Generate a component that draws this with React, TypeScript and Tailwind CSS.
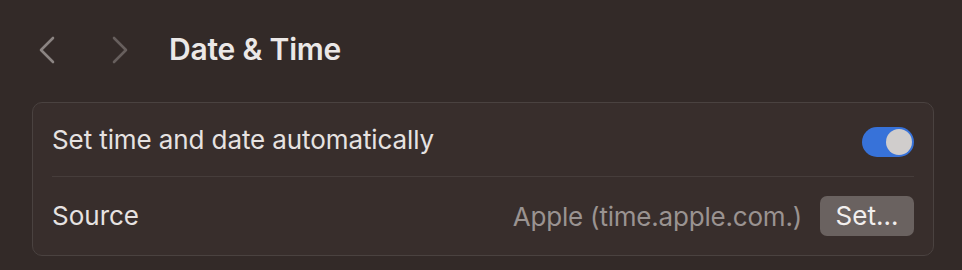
import React from "react";

export default function App() {
  return (
    <div
      className="w-[962px] h-[270px] bg-[#332a28] overflow-hidden"
      style={{ fontFamily: "Inter, 'Noto Sans', sans-serif" }}
    >
      <div className="h-[100px] flex items-center pl-[38px] pb-[2px]">
        <svg width="18" height="28" viewBox="0 0 18 28" className="mt-[1px]">
          <path d="M15 2 L3 14 L15 26" fill="none" stroke="#8b8482" strokeWidth="2.6" strokeLinecap="round" strokeLinejoin="round" />
        </svg>
        <svg width="18" height="28" viewBox="0 0 18 28" className="ml-[55px] mt-[1px]">
          <path d="M3 2 L15 14 L3 26" fill="none" stroke="#675f5d" strokeWidth="2.6" strokeLinecap="round" strokeLinejoin="round" />
        </svg>
        <div className="ml-[40px] text-[30px] font-semibold text-[#ebe8e7] tracking-[-0.2px]">Date &amp; Time</div>
      </div>
      <div className="ml-[32px] w-[902px] h-[154px] mt-[2px] rounded-[10px] border border-[#4a4240] bg-[#382e2c] px-[19px] flex flex-col">
        <div className="h-[74px] flex items-center justify-between border-b border-[#463d3b]">
          <div className="text-[26px] text-[#e6e2e1] tracking-[-0.1px]">Set time and date automatically</div>
          <div className="w-[52px] h-[30px] rounded-full bg-[#3772d9] flex items-center justify-end pr-[2px] mt-[4px]">
            <div className="w-[26px] h-[26px] rounded-full bg-[#d0cdcc]" />
          </div>
        </div>
        <div className="flex-1 flex items-center justify-between">
          <div className="text-[26px] text-[#e6e2e1] pb-[2px]">Source</div>
          <div className="flex items-center">
            <div className="text-[26px] text-[#9a9391] tracking-[-0.2px]">Apple (time.apple.com.)</div>
            <div className="ml-[18px] w-[94px] h-[40px] rounded-[7px] bg-[#6a6260] flex items-center justify-center text-[26px] text-[#f2efee] pb-[1px]">
              Set…
            </div>
          </div>
        </div>
      </div>
    </div>
  );
}
